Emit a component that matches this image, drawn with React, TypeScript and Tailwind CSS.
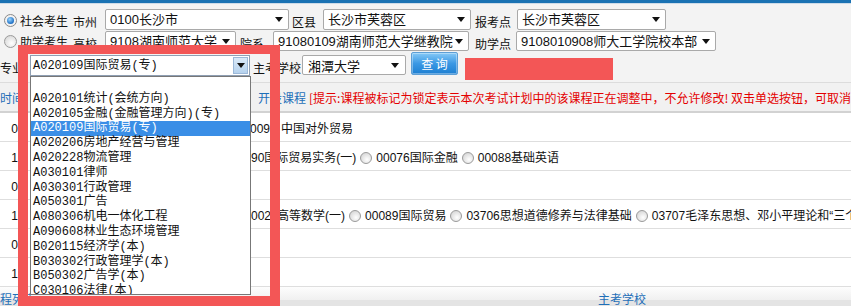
import React from "react";

const SANS = "font-['Liberation_Sans','Noto_Sans_CJK_SC',sans-serif]";
const CJK = "font-['Noto_Sans_CJK_SC',sans-serif]";
const MONO = "font-['Liberation_Mono','Noto_Sans_CJK_SC',monospace]";

function Arrow() {
  return (
    <svg width="8" height="5" viewBox="0 0 8 5" className="shrink-0">
      <path d="M0 0H8L4 5Z" fill="#111" />
    </svg>
  );
}

function Sel({ cls, text }: { cls: string; text: string }) {
  return (
    <div
      className={`flex items-center bg-white border border-[#a9a9a9] rounded-[2px] shrink-0 ${cls}`}
    >
      <span className={`pl-[4px] text-[13px] leading-none text-[#111] whitespace-nowrap ${SANS}`}>
        {text}
      </span>
      <span className="ml-auto mr-[5px] flex">
        <Arrow />
      </span>
    </div>
  );
}

function Label({ cls, text }: { cls: string; text: string }) {
  return (
    <span
      className={`shrink-0 text-[12px] leading-none text-[#111] whitespace-nowrap ${CJK} ${cls}`}
    >
      {text}
    </span>
  );
}

function Radio() {
  return (
    <span className="inline-block shrink-0 w-[12px] h-[12px] rounded-full border border-[#9a9a9a] bg-[radial-gradient(circle_at_60%_65%,#ffffff,#d9d9d9_75%)] mx-[4px]" />
  );
}

const listItems = [
  "",
  "A020101统计(会统方向)",
  "A020105金融(金融管理方向)(专)",
  "A020109国际贸易(专)",
  "A020206房地产经营与管理",
  "A020228物流管理",
  "A030101律师",
  "A030301行政管理",
  "A050301广告",
  "A080306机电一体化工程",
  "A090608林业生态环境管理",
  "B020115经济学(本)",
  "B030302行政管理学(本)",
  "B050302广告学(本)",
  "C030106法律(本)",
];

export default function App() {
  const rowBase = `flex items-center h-[29px] border-b border-[#dedede] bg-white pt-[3px] text-[12px] leading-none text-[#111] whitespace-nowrap ${SANS}`;
  return (
    <div className="relative w-[851px] h-[306px] overflow-hidden bg-[#f3f3f3]">
      <div className="h-[3px] bg-[#1a72b3]" />
      <div className="h-[1px] bg-[#cddbe8]" />

      {/* Form rows */}
      <div className="pt-[5px]">
        {/* Row 1 */}
        <div className="flex items-center h-[21px]">
          <div className="w-[20px] shrink-0 pl-[4px] flex">
            <span className="flex items-center justify-center w-[13px] h-[13px] rounded-full border border-[#8a8a8a] bg-[#f2f2f2] mt-[1px]">
              <span className="w-[7px] h-[7px] rounded-full bg-[radial-gradient(circle_at_40%_35%,#9bd6ff,#1d6fc4_70%)]" />
            </span>
          </div>
          <Label cls="w-[53px] mt-[2px]" text="社会考生" />
          <Label cls="w-[32px] mt-[5px]" text="市州" />
          <Sel cls="w-[184px] h-[21px]" text="0100长沙市" />
          <Label cls="w-[34px] pl-[3px] mt-[5px]" text="区县" />
          <Sel cls="w-[148px] h-[21px]" text="长沙市芙蓉区" />
          <Label cls="w-[46px] pl-[4px] mt-[5px]" text="报考点" />
          <Sel cls="w-[149px] h-[21px]" text="长沙市芙蓉区" />
        </div>

        {/* Row 2 */}
        <div className="flex items-center h-[20px] mt-[1px]">
          <div className="w-[20px] shrink-0 pl-[4px] flex">
            <span className="w-[13px] h-[13px] rounded-full border border-[#9a9a9a] bg-[radial-gradient(circle_at_60%_65%,#ffffff,#dcdcdc_75%)]" />
          </div>
          <Label cls="w-[53px] mt-[2px]" text="助学考生" />
          <Label cls="w-[32px] mt-[5px]" text="高校" />
          <Sel cls="w-[131px] h-[20px]" text="9108湖南师范大学" />
          <Label cls="w-[37px] pl-[4px] mt-[5px]" text="院系" />
          <Sel cls="w-[196px] h-[20px]" text="91080109湖南师范大学继教院" />
          <Label cls="w-[47px] pl-[6px] mt-[5px]" text="助学点" />
          <Sel cls="w-[200px] h-[20px]" text="9108010908师大工学院校本部" />
        </div>

        {/* Row 3 */}
        <div className="flex items-start h-[24px] mt-[1px]">
          <Label cls="w-[30px] mt-[10px]" text="专业" />
          <div className="mt-[3px] w-[220px] h-[21px] shrink-0 flex items-center bg-white border border-[#8f9fb3]">
            <span className={`pl-[2px] text-[12px] leading-none text-[#111] whitespace-nowrap ${MONO}`}>
              A020109国际贸易(专)
            </span>
            <span className="ml-auto mr-[1px] w-[15px] h-[17px] flex items-center justify-center border border-[#9cb8d8] bg-[linear-gradient(to_bottom,#dbeaf8,#b5d2ee)]">
              <Arrow />
            </span>
          </div>
          <Label cls="w-[52px] pl-[3px] mt-[10px]" text="主考学校" />
          <div className="mt-[3px] w-[104px] h-[20px] shrink-0 flex items-center bg-white border border-[#a9a9a9] rounded-[2px]">
            <span className={`pl-[5px] text-[13px] leading-none text-[#111] ${CJK}`}>湘潭大学</span>
            <span className="ml-auto mr-[6px] flex">
              <Arrow />
            </span>
          </div>
          <button className="ml-[5px] w-[47px] h-[23px] shrink-0 flex items-center justify-center rounded-[2px] border border-[#5d9fd6] bg-[linear-gradient(to_bottom,#86c9f6,#3a98e4_50%,#1d7fd2)] shadow-[inset_0_0_0_1px_rgba(255,255,255,0.35)]">
            <span className={`text-[12px] leading-none text-white ${CJK}`}>查 询</span>
          </button>
          <div className="ml-[7px] mt-[6px] w-[148px] h-[22px] shrink-0 bg-[#f35656]" />
        </div>
      </div>

      {/* Table header */}
      <div
        className={`mt-[6px] h-[31px] flex items-center border-t border-[#dcdcdc] border-b-2 border-b-[#d2d2d2] bg-[#f1f1f1] pt-[1px] text-[12px] leading-none whitespace-nowrap ${CJK}`}
      >
        <span className="w-[258px] shrink-0 text-[#1f6fb8]">时间</span>
        <span className="shrink-0 text-[#1f6fb8]">开设课程</span>
        <span className="shrink-0 ml-[3px] text-[#e40000]">
          [提示:课程被标记为锁定表示本次考试计划中的该课程正在调整中，不允许修改! 双击单选按钮，可取消选择]
        </span>
      </div>

      {/* Table rows */}
      <div className={rowBase}>
        <span className="w-[29px] shrink-0 text-center">0</span>
        <div className="ml-[221px] shrink-0 flex items-center">
          <span>009</span>
          <span className="ml-[11px]">中国对外贸易</span>
        </div>
      </div>
      <div className={rowBase}>
        <span className="w-[29px] shrink-0 text-center">1</span>
        <div className="ml-[222px] shrink-0 flex items-center">
          <span>90国际贸易实务(一)</span>
          <Radio />
          <span>00076国际金融</span>
          <Radio />
          <span>00088基础英语</span>
        </div>
      </div>
      <div className={rowBase}>
        <span className="w-[29px] shrink-0 text-center">0</span>
      </div>
      <div className={rowBase}>
        <span className="w-[29px] shrink-0 text-center">1</span>
        <div className="ml-[222px] shrink-0 flex items-center">
          <span className="shrink-0">002</span>
          <span className="shrink-0 ml-[6px]">高等数学(一)</span>
          <Radio />
          <span className="shrink-0">00089国际贸易</span>
          <Radio />
          <span className="shrink-0">03706思想道德修养与法律基础</span>
          <Radio />
          <span className="shrink-0">03707毛泽东思想、邓小平理论和“三个代表”重要思想概论</span>
        </div>
      </div>
      <div className={rowBase}>
        <span className="w-[29px] shrink-0 text-center">0</span>
      </div>
      <div className={rowBase}>
        <span className="w-[29px] shrink-0 text-center">1</span>
      </div>

      {/* Footer */}
      <div
        className={`h-[30px] flex items-start pt-[6px] bg-[linear-gradient(to_bottom,#fdfdfd_0px,#f0f0f0_13px,#e4e4e4_13px)] text-[12px] leading-none text-[#1f6fb8] whitespace-nowrap ${CJK}`}
      >
        <span className="w-[598px] shrink-0">程列表</span>
        <span className="shrink-0">主考学校</span>
      </div>

      {/* Dropdown list overlay */}
      <div className="absolute left-[30px] top-[76px] w-[221px] h-[219px] bg-white border border-[#777] overflow-hidden">
        {listItems.map((t, i) => (
          <div
            key={i}
            className={`h-[14.8px] leading-[14.8px] pl-[2px] text-[12px] whitespace-nowrap ${MONO} ${
              i === 3 ? "bg-[#3a8ee6] text-white" : "text-[#111]"
            }`}
          >
            {t}
          </div>
        ))}
      </div>

      {/* Red annotation box */}
      <div className="absolute left-[18px] top-[45px] w-[262px] h-[261px] border-[10px] border-t-[9px] border-[#f35656] pointer-events-none" />
    </div>
  );
}
